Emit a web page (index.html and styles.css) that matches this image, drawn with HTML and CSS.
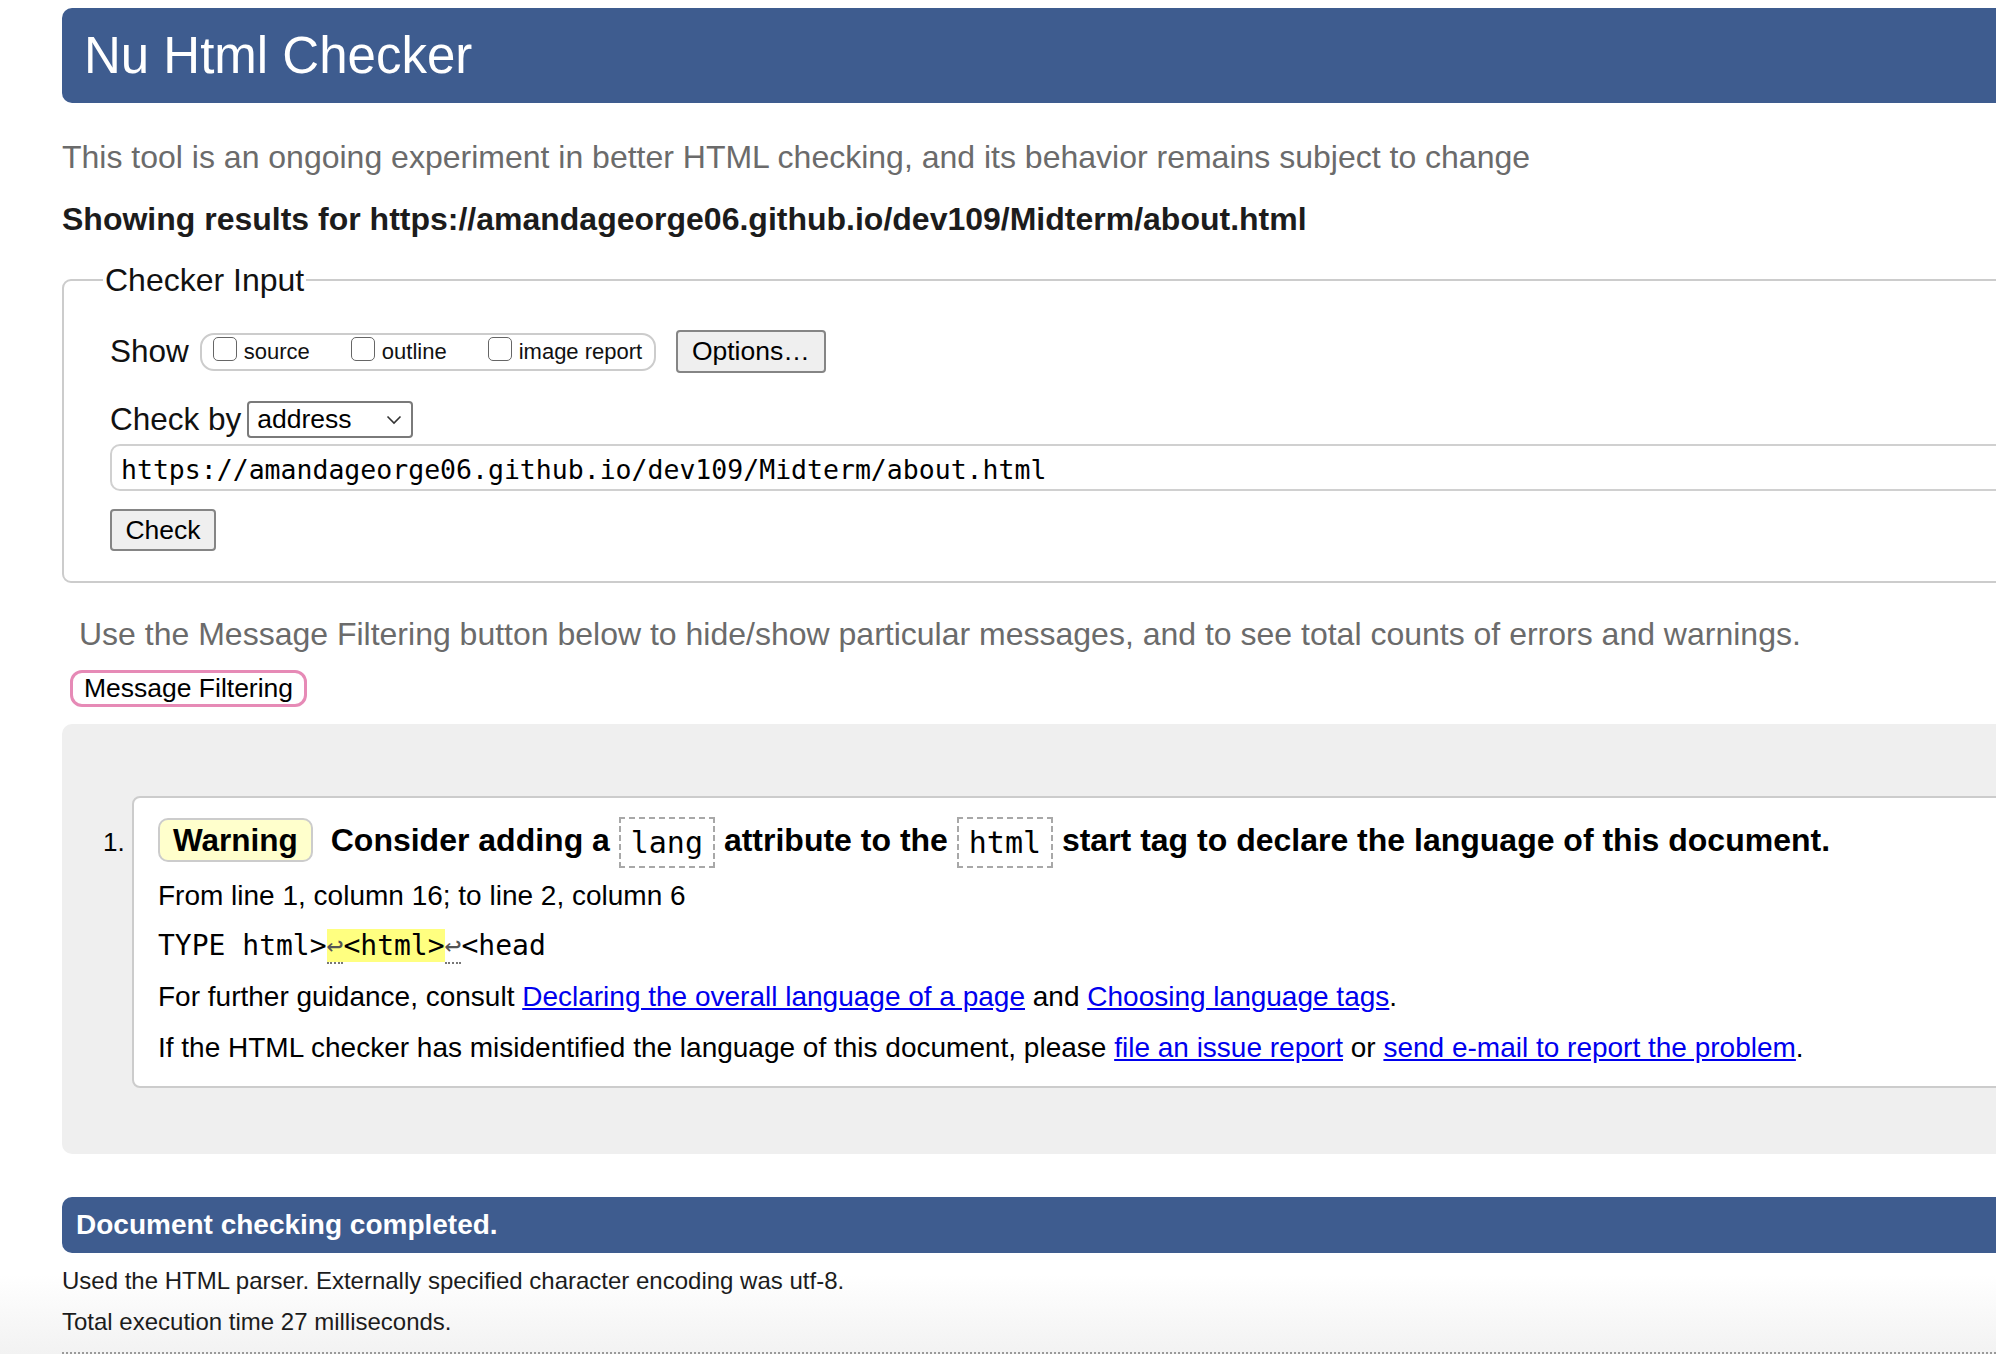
FILE: index.html
```html
<!DOCTYPE html>
<html lang="en">
<head>
<meta charset="utf-8">
<title>Showing results for https://amandageorge06.github.io/dev109/Midterm/about.html - Nu Html Checker</title>
<link rel="stylesheet" href="styles.css">
</head>
<body>
<div class="page">
  <h1 class="banner">Nu Html Checker</h1>
  <p class="intro">This tool is an ongoing experiment in better HTML checking, and its behavior remains subject to change</p>
  <p class="results-for">Showing results for https://amandageorge06.github.io/dev109/Midterm/about.html</p>

  <form class="checker">
    <fieldset class="checker-input">
      <legend class="legend">Checker Input</legend>
      <div class="show-row">
        <span class="show-label">Show</span>
        <span class="show-group">
          <label class="opt"><input type="checkbox" class="cb"><span>source</span></label>
          <label class="opt"><input type="checkbox" class="cb"><span>outline</span></label>
          <label class="opt"><input type="checkbox" class="cb"><span>image report</span></label>
        </span>
        <button type="button" class="btn options">Options…</button>
      </div>
      <div class="checkby-row">
        <span class="checkby-label">Check by</span>
        <span class="select">address
          <svg class="chev" width="16" height="10" viewBox="0 0 16 10"><polyline points="1.5,1.5 8,8 14.5,1.5" fill="none" stroke="#333" stroke-width="1.6"/></svg>
        </span>
      </div>
      <div class="url">https://amandageorge06.github.io/dev109/Midterm/about.html</div>
      <div class="check-row"><button type="button" class="btn check">Check</button></div>
    </fieldset>
  </form>

  <p class="filter-note">Use the Message Filtering button below to hide/show particular messages, and to see total counts of errors and warnings.</p>
  <button type="button" class="filter-btn">Message Filtering</button>

  <div class="results">
    <ol class="messages">
      <li class="msg">
        <p class="msg-title"><strong class="badge">Warning</strong> <span>Consider adding a <code class="tok">lang</code> attribute to the <code class="tok">html</code> start tag to declare the language of this document.</span></p>
        <p class="loc">From line 1, column 16; to line 2, column 6</p>
        <p class="extract"><code>TYPE html&gt;<b class="hl"><span class="lf">↩</span>&lt;html&gt;</b><span class="lf">↩</span>&lt;head</code></p>
        <p class="line">For further guidance, consult <a href="#">Declaring the overall language of a page</a> and <a href="#">Choosing language tags</a>.</p>
        <p class="line">If the HTML checker has misidentified the language of this document, please <a href="#">file an issue report</a> or <a href="#">send e-mail to report the problem</a>.</p>
      </li>
    </ol>
  </div>

  <h2 class="done">Document checking completed.</h2>
  <p class="details first">Used the HTML parser. Externally specified character encoding was utf-8.</p>
  <p class="details">Total execution time 27 milliseconds.</p>
  <div class="rule"></div>
</div>
</body>
</html>
```
FILE: styles.css
```css
html, body {
  margin: 0;
  padding: 0;
}
body {
  font-family: "Liberation Sans", Arial, Helvetica, sans-serif;
  color: #000;
  background: #fff;
  overflow: hidden;
}
.page {
  box-sizing: border-box;
  height: 1354px;
  padding: 8px 0 0 62px;
  background: linear-gradient(to bottom, #ffffff 0, #ffffff 1275px, #f2f2f2 1354px);
}
.banner {
  margin: 0 -40px 0 0;
  height: 95px;
  box-sizing: border-box;
  display: flex;
  align-items: center;
  padding-left: 22px;
  background: #3e5c8f;
  border-radius: 10px 0 0 10px;
  color: #fff;
  font-size: 51px;
  font-weight: normal;
}
.intro {
  margin: 36px 0 0;
  font-size: 32px;
  line-height: 36px;
  color: #6b6b6b;
}
.results-for {
  margin: 26px 0 0;
  font-size: 32px;
  line-height: 36px;
  font-weight: bold;
  color: #1c1c1c;
}
.checker {
  margin: 25px -40px 0 0;
}
.checker-input {
  margin: 0;
  min-width: 0;
  padding: 0 0 30px 46px;
  border: 2px solid #cccccc;
  border-radius: 9px 0 0 9px;
}
.legend {
  font-size: 32px;
  line-height: 36px;
  padding: 0 2px;
  margin-left: -7px;
  color: #111;
}
.show-row {
  display: flex;
  align-items: center;
  height: 43px;
  margin-top: 32px;
}
.show-label {
  font-size: 31.5px;
  margin-right: 11px;
  color: #111;
}
.show-group {
  display: flex;
  align-items: center;
  gap: 41px;
  box-sizing: border-box;
  height: 38px;
  width: 456px;
  padding: 0 11px;
  border: 2px solid #cccccc;
  border-radius: 14px;
}
.opt {
  display: flex;
  align-items: center;
  font-size: 22px;
  color: #111;
}
.cb {
  appearance: none;
  -webkit-appearance: none;
  box-sizing: border-box;
  width: 24px;
  height: 24px;
  margin: 0 7px 6px 0;
  border: 1.5px solid #666;
  border-radius: 5px;
  background: #fff;
}
.btn {
  box-sizing: border-box;
  font-family: "Liberation Sans", Arial, Helvetica, sans-serif;
  font-size: 26.5px;
  color: #000;
  background: #efefef;
  border: 2px solid #858585;
  border-radius: 4px;
  padding: 0;
}
.options {
  margin-left: 20px;
  width: 150px;
  height: 43px;
}
.checkby-row {
  display: flex;
  align-items: center;
  height: 37px;
  margin-top: 28px;
}
.checkby-label {
  font-size: 31.5px;
  margin-right: 6px;
  color: #111;
}
.select {
  box-sizing: border-box;
  display: flex;
  align-items: center;
  justify-content: space-between;
  width: 166px;
  height: 37px;
  padding: 0 9px 0 8px;
  border: 2px solid #7a7a7a;
  border-radius: 4px;
  font-size: 26.5px;
  background: #fff;
}
.chev {
  display: block;
}
.url {
  box-sizing: border-box;
  margin-top: 6px;
  height: 47px;
  display: flex;
  align-items: center;
  padding: 3px 0 0 9px;
  border: 2px solid #d0d0d0;
  border-radius: 10px 0 0 10px;
  font-family: "DejaVu Sans Mono", "Liberation Mono", monospace;
  font-size: 26.5px;
  color: #000;
}
.check-row {
  margin-top: 18px;
}
.check {
  display: block;
  width: 106px;
  height: 42px;
}
.filter-note {
  margin: 33px 0 0;
  padding-left: 17px;
  font-size: 32px;
  line-height: 36px;
  color: #6b6b6b;
}
.filter-btn {
  display: block;
  box-sizing: border-box;
  margin: 18px 0 0 8px;
  width: 237px;
  height: 37px;
  padding: 0;
  border: 3px solid #e68ab6;
  border-radius: 12px;
  background: #fff;
  font-family: "Liberation Sans", Arial, Helvetica, sans-serif;
  font-size: 26.5px;
  color: #000;
}
.results {
  margin: 17px -40px 0 0;
  padding: 72px 0 66px 0;
  background: #efefef;
  border-radius: 10px 0 0 10px;
}
.messages {
  margin: 0;
  padding: 0 0 0 70px;
}
.msg {
  background: #fff;
  border: 2px solid #cccccc;
  border-radius: 8px 0 0 8px;
  padding: 16px 24px 21px 24px;
  font-size: 28px;
}
.msg::marker {
  font-size: 26px;
  font-weight: normal;
}
.msg p {
  margin: 0;
}
.msg-title {
  line-height: 52px;
  font-size: 32px;
  font-weight: bold;
}
.badge {
  display: inline-block;
  vertical-align: middle;
  box-sizing: border-box;
  height: 44px;
  line-height: 40px;
  padding: 0 13px;
  margin: 0 9px 6px 0;
  background: #ffffcc;
  border: 2px solid #cccccc;
  border-radius: 10px;
  font-size: 31.5px;
}
.tok {
  display: inline-block;
  vertical-align: middle;
  box-sizing: border-box;
  height: 51px;
  line-height: 47px;
  padding: 0 10px;
  border: 2px dashed #a8a8a8;
  font-family: "DejaVu Sans Mono", "Liberation Mono", monospace;
  font-size: 30px;
  font-weight: normal;
}
.loc {
  line-height: 34px;
}
.msg .loc {
  margin-top: 11px;
}
.msg .extract {
  margin-top: 16px;
  line-height: 34px;
}
.extract code {
  font-family: "DejaVu Sans Mono", "Liberation Mono", monospace;
  font-size: 28px;
}
.hl {
  font-weight: normal;
  background: #ffff80;
}
.lf {
  color: #555;
  border-bottom: 2px dotted #777;
}
.msg .line {
  margin-top: 17px;
  line-height: 34px;
}
.line a {
  color: #0000ee;
  text-decoration: underline;
}
.done {
  margin: 43px -40px 0 0;
  height: 56px;
  box-sizing: border-box;
  display: flex;
  align-items: center;
  padding-left: 14px;
  background: #3e5c8f;
  border-radius: 10px 0 0 10px;
  color: #fff;
  font-size: 28px;
  font-weight: bold;
}
.details {
  margin: 11px 0 0;
  font-size: 24px;
  line-height: 30px;
  color: #1c1c1c;
}
.details.first {
  margin-top: 13px;
}
.rule {
  margin-top: 15px;
  border-top: 2px dotted #9a9a9a;
}
```
